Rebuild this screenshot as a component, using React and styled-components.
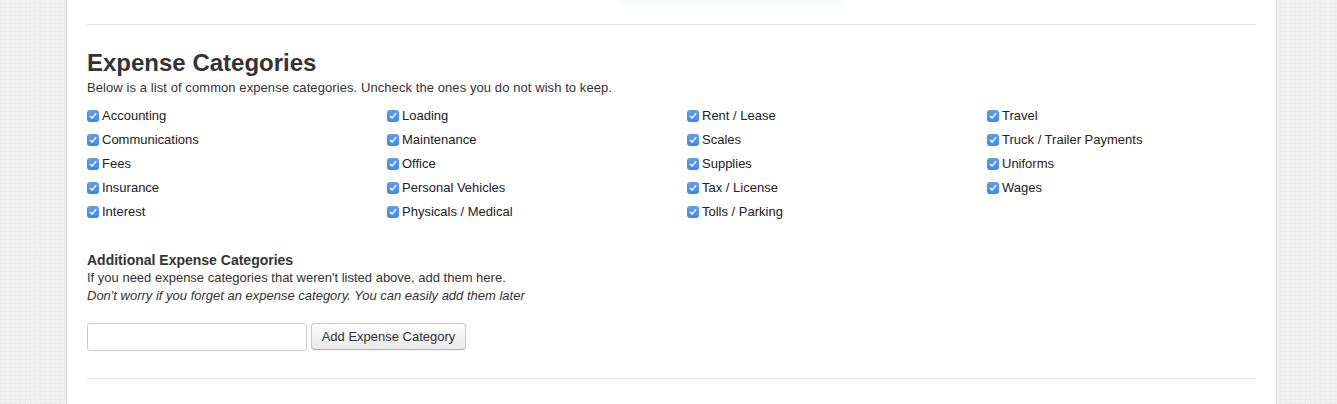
import React from "react";
import styled, { createGlobalStyle } from "styled-components";

const GlobalStyle = createGlobalStyle`
  html, body {
    margin: 0;
    padding: 0;
    background-color: #f1f1f1;
    background-image:
      repeating-linear-gradient(0deg, rgba(0,0,0,0.018) 0 1px, transparent 1px 4px),
      repeating-linear-gradient(90deg, rgba(0,0,0,0.018) 0 1px, transparent 1px 5px);
    font-family: "Liberation Sans", Arial, sans-serif;
    color: #333;
  }
`;

const categories = [
  ["Accounting", "Communications", "Fees", "Insurance", "Interest"],
  ["Loading", "Maintenance", "Office", "Personal Vehicles", "Physicals / Medical"],
  ["Rent / Lease", "Scales", "Supplies", "Tax / License", "Tolls / Parking"],
  ["Travel", "Truck / Trailer Payments", "Uniforms", "Wages"]
];

const Panel = styled.div`
  display: flow-root;
  margin-left: 66px;
  width: 1211px;
  height: 404px;
  overflow: hidden;
  box-sizing: border-box;
  background: #fff;
  border-left: 1px solid #dcdcdc;
  border-right: 1px solid #dcdcdc;
  padding: 0 20px;
`;

const TopGlow = styled.div`
  margin-left: 538px;
  width: 218px;
  height: 0;
  box-shadow: 0 0 5px 2px rgba(110, 160, 230, 0.12);
`;

const Divider = styled.hr`
  border: 0;
  border-top: 1px solid #e3e3e3;
  margin: ${p => p.$top}px 0 0;
`;

const Heading = styled.h3`
  margin: 22px 0 0;
  font-size: 24px;
  line-height: 32px;
  font-weight: bold;
  color: #333;
`;

const Lead = styled.p`
  margin: 0;
  font-size: 13px;
  line-height: 18px;
  letter-spacing: 0.08px;
`;

const Grid = styled.div`
  display: grid;
  grid-template-columns: repeat(4, 300px);
  margin-top: 6px;
`;

const Column = styled.div`
  display: flex;
  flex-direction: column;
`;

const CheckRow = styled.label`
  display: flex;
  align-items: center;
  gap: 3px;
  height: 24px;
  font-size: 13px;
  color: #222;
  cursor: pointer;
`;

const Box = styled.span`
  width: 12px;
  height: 12px;
  border-radius: 3px;
  background: linear-gradient(#5aa0f5, #3d86ee);
  display: flex;
  align-items: center;
  justify-content: center;
  margin-top: 1px;
`;

const SubHeading = styled.h4`
  margin: 28px 0 0;
  font-size: 14px;
  line-height: 18px;
  font-weight: bold;
  color: #333;
`;

const Note = styled.p`
  margin: 0;
  font-size: 13px;
  line-height: 18px;
  font-style: ${p => (p.$italic ? "italic" : "normal")};
`;

const Form = styled.div`
  display: flex;
  align-items: flex-start;
  gap: 4px;
  margin-top: 18px;
`;

const TextInput = styled.input`
  width: 220px;
  height: 28px;
  box-sizing: border-box;
  border: 1px solid #ccc;
  border-radius: 3px;
  padding: 4px 6px;
  font-family: inherit;
  font-size: 13px;
`;

const Button = styled.button`
  height: 27px;
  width: 155px;
  box-sizing: border-box;
  border: 1px solid #c8c8c8;
  border-bottom-color: #b3b3b3;
  border-radius: 4px;
  background: linear-gradient(#ffffff, #e8e8e8);
  font-family: inherit;
  font-size: 13px;
  color: #333;
  padding: 0;
  box-shadow: 0 1px 1px rgba(0, 0, 0, 0.05);
`;

function Check() {
  return (
    <Box>
      <svg width="8" height="8" viewBox="0 0 8 8">
        <path d="M1.3 4.3 L3.2 6.1 L6.8 1.6" fill="none" stroke="#fff" strokeWidth="1.5" strokeLinecap="round" strokeLinejoin="round" />
      </svg>
    </Box>
  );
}

export default function App() {
  return (
    <>
      <GlobalStyle />
      <Panel>
        <TopGlow />
        <Divider $top={24} />
        <Heading>Expense Categories</Heading>
        <Lead>Below is a list of common expense categories. Uncheck the ones you do not wish to keep.</Lead>
        <Grid>
          {categories.map((col, i) => (
            <Column key={i}>
              {col.map(name => (
                <CheckRow key={name}>
                  <Check />
                  {name}
                </CheckRow>
              ))}
            </Column>
          ))}
        </Grid>
        <SubHeading>Additional Expense Categories</SubHeading>
        <Note>If you need expense categories that weren't listed above, add them here.</Note>
        <Note $italic>Don't worry if you forget an expense category. You can easily add them later</Note>
        <Form>
          <TextInput type="text" />
          <Button>Add Expense Category</Button>
        </Form>
        <Divider $top={27} />
      </Panel>
    </>
  );
}
